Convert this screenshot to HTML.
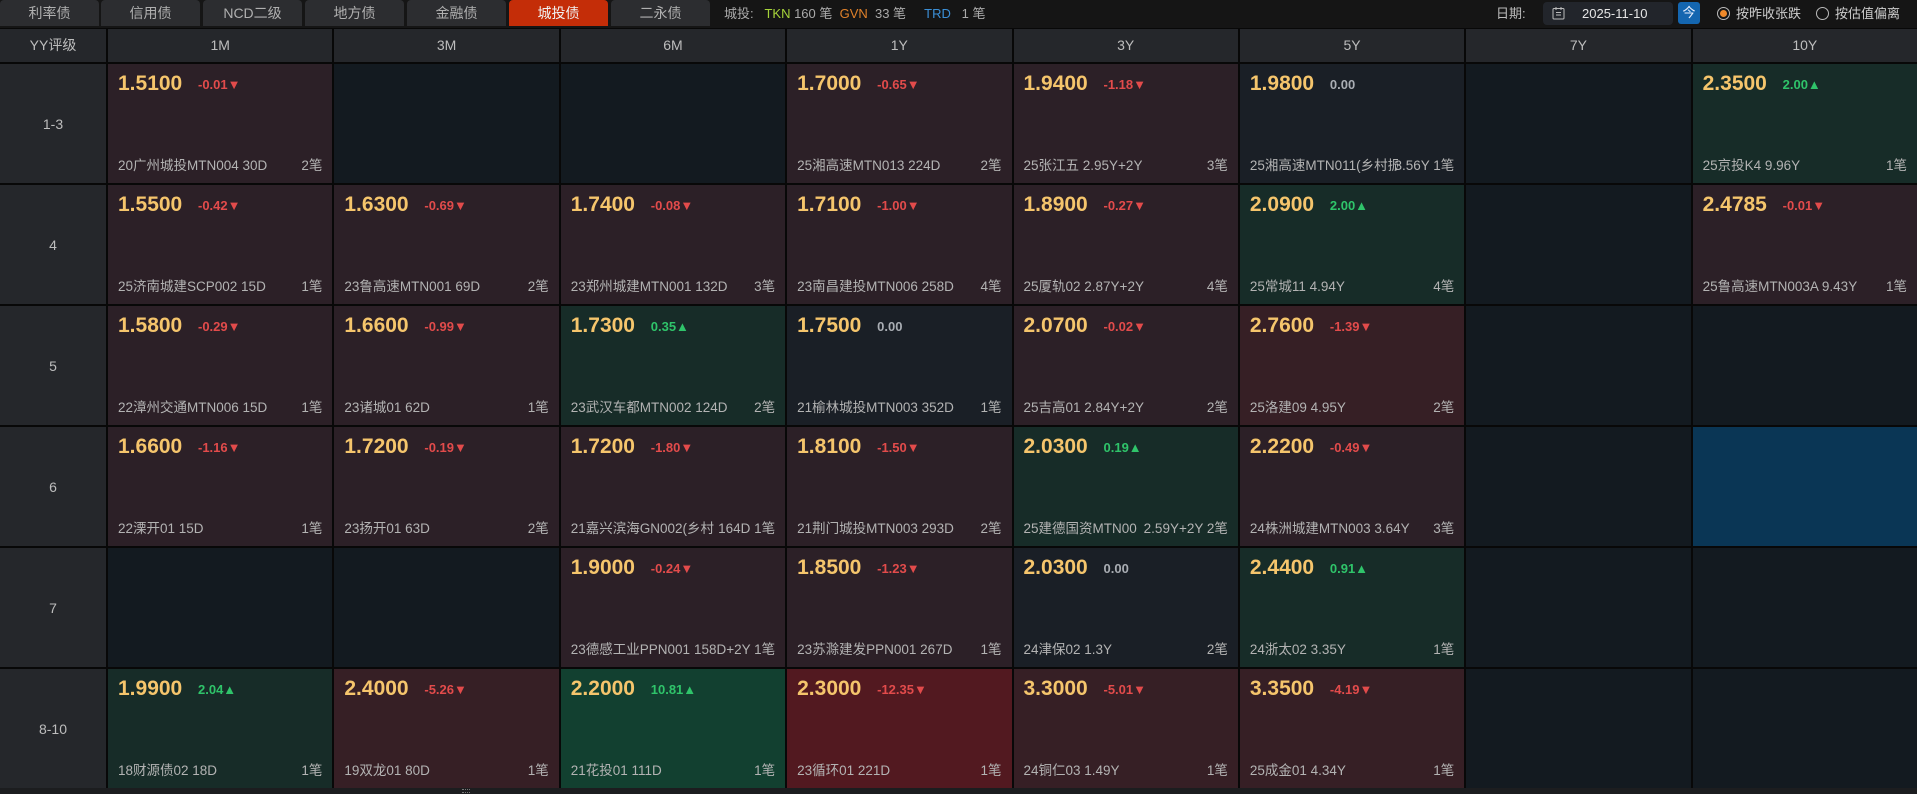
<!DOCTYPE html>
<html><head><meta charset="utf-8">
<style>
*{margin:0;padding:0;box-sizing:border-box}
body{width:1917px;height:794px;background:#080808;overflow:hidden;font-family:"Liberation Sans","Noto Sans CJK SC",sans-serif;position:relative}
.top{position:absolute;left:0;top:0;width:1917px;height:28px;background:#151515}
.tab{position:absolute;top:0;height:26px;width:99px;background:#2c2d30;border-radius:4px 4px 0 0;color:#b0b0b0;font-size:14px;text-align:center;line-height:26px}
.tab.on{background:#c42d08;color:#f0f0f0}
.stat{position:absolute;left:724px;top:0;line-height:27px;font-size:13px;color:#aaa;white-space:pre}
.grid{position:absolute;left:0;top:29px;width:1917px;display:grid;grid-template-columns:106px repeat(8,1fr);grid-template-rows:33px repeat(6,119px);gap:2px}
.h{background:#25272b;color:#bdbdbd;font-size:14px;text-align:center;line-height:33px}
.l{background:#25272b;color:#bdbdbd;font-size:14px;display:flex;align-items:center;justify-content:center}
.c{position:relative;background:#131a20}
.r{background:#2c2027}.g{background:#172c28}.z{background:#1a1f26}.m{background:#361f25}.R{background:#521920}.G{background:#124030}.b{background:#0a3655}
.p{position:absolute;left:10px;top:8px;font-size:21px;font-weight:bold;color:#f5c56c}
.d{position:absolute;left:90px;top:13px;font-size:13px;font-weight:bold}
.dn{color:#e24b4b}.up{color:#2fc46a}.zr{color:#a9adb3}
.n{position:absolute;left:10px;top:90px;font-size:13.5px;color:#b3b3b3;white-space:nowrap;overflow:hidden;max-width:205px}
.k{position:absolute;right:10px;top:90px;font-size:13.5px;color:#b3b3b3}
.bot{position:absolute;left:0;top:788px;width:1917px;height:6px;background:#1c1d1f}
</style></head><body>
<div class="top">
<div class="tab" style="left:0">利率债</div>
<div class="tab" style="left:101px">信用债</div>
<div class="tab" style="left:203px">NCD二级</div>
<div class="tab" style="left:305px">地方债</div>
<div class="tab" style="left:407px">金融债</div>
<div class="tab on" style="left:509px">城投债</div>
<div class="tab" style="left:611px">二永债</div>
<div class="stat">城投:   <span style="color:#a6d33a">TKN</span> 160 笔  <span style="color:#e0812a">GVN</span>  33 笔     <span style="color:#3b8fd6">TRD</span>   1 笔</div>
<div style="position:absolute;left:1496px;top:0;line-height:27px;font-size:13px;color:#bbb">日期:</div>
<div style="position:absolute;left:1543px;top:2px;width:130px;height:23px;background:#22252b;border-radius:4px;color:#e6e6e6;font-size:13px;line-height:23px">
<svg style="position:absolute;left:9px;top:5px" width="13" height="13" viewBox="0 0 13 13" fill="none" stroke="#bbb" stroke-width="1"><rect x="1" y="1.5" width="11" height="10.5" rx="1"/><path d="M4 0v3M9 0v3M4 5.5h5M4 8h5"/></svg>
<span style="position:absolute;left:39px">2025-11-10</span></div>
<div style="position:absolute;left:1678px;top:2px;width:22px;height:22px;background:#1466b0;border-radius:3px;color:#e8f0ff;font-size:13px;text-align:center;line-height:22px">今</div>
<div style="position:absolute;left:1717px;top:7px;width:13px;height:13px;border:1px solid #bbb;border-radius:50%"><div style="margin:2px;width:7px;height:7px;border-radius:50%;background:#f08a2a"></div></div>
<div style="position:absolute;left:1736px;top:0;line-height:27px;font-size:13px;color:#ccc">按昨收张跌</div>
<div style="position:absolute;left:1816px;top:7px;width:13px;height:13px;border:1px solid #bbb;border-radius:50%"></div>
<div style="position:absolute;left:1835px;top:0;line-height:27px;font-size:13px;color:#ccc">按估值偏离</div>
</div>
<div class="grid">
<div class="h">YY评级</div><div class="h">1M</div><div class="h">3M</div><div class="h">6M</div><div class="h">1Y</div><div class="h">3Y</div><div class="h">5Y</div><div class="h">7Y</div><div class="h">10Y</div>

<div class="l">1-3</div>
<div class="c r"><div class="p">1.5100</div><div class="d dn">-0.01▼</div><div class="n">20广州城投MTN004 30D</div><div class="k">2笔</div></div>
<div class="c"></div><div class="c"></div>
<div class="c r"><div class="p">1.7000</div><div class="d dn">-0.65▼</div><div class="n">25湘高速MTN013 224D</div><div class="k">2笔</div></div>
<div class="c r"><div class="p">1.9400</div><div class="d dn">-1.18▼</div><div class="n">25张江五 2.95Y+2Y</div><div class="k">3笔</div></div>
<div class="c z"><div class="p">1.9800</div><div class="d zr">0.00</div><div class="n" style="max-width:148px">25湘高速MTN011(乡村振</div><div class="k">3.56Y 1笔</div></div>
<div class="c"></div>
<div class="c g"><div class="p">2.3500</div><div class="d up">2.00▲</div><div class="n">25京投K4 9.96Y</div><div class="k">1笔</div></div>

<div class="l">4</div>
<div class="c r"><div class="p">1.5500</div><div class="d dn">-0.42▼</div><div class="n">25济南城建SCP002 15D</div><div class="k">1笔</div></div>
<div class="c r"><div class="p">1.6300</div><div class="d dn">-0.69▼</div><div class="n">23鲁高速MTN001 69D</div><div class="k">2笔</div></div>
<div class="c r"><div class="p">1.7400</div><div class="d dn">-0.08▼</div><div class="n">23郑州城建MTN001 132D</div><div class="k">3笔</div></div>
<div class="c r"><div class="p">1.7100</div><div class="d dn">-1.00▼</div><div class="n">23南昌建投MTN006 258D</div><div class="k">4笔</div></div>
<div class="c r"><div class="p">1.8900</div><div class="d dn">-0.27▼</div><div class="n">25厦轨02 2.87Y+2Y</div><div class="k">4笔</div></div>
<div class="c g"><div class="p">2.0900</div><div class="d up">2.00▲</div><div class="n">25常城11 4.94Y</div><div class="k">4笔</div></div>
<div class="c"></div>
<div class="c r"><div class="p">2.4785</div><div class="d dn">-0.01▼</div><div class="n">25鲁高速MTN003A 9.43Y</div><div class="k">1笔</div></div>

<div class="l">5</div>
<div class="c r"><div class="p">1.5800</div><div class="d dn">-0.29▼</div><div class="n">22漳州交通MTN006 15D</div><div class="k">1笔</div></div>
<div class="c r"><div class="p">1.6600</div><div class="d dn">-0.99▼</div><div class="n">23诸城01 62D</div><div class="k">1笔</div></div>
<div class="c g"><div class="p">1.7300</div><div class="d up">0.35▲</div><div class="n">23武汉车都MTN002 124D</div><div class="k">2笔</div></div>
<div class="c z"><div class="p">1.7500</div><div class="d zr">0.00</div><div class="n">21榆林城投MTN003 352D</div><div class="k">1笔</div></div>
<div class="c r"><div class="p">2.0700</div><div class="d dn">-0.02▼</div><div class="n">25吉高01 2.84Y+2Y</div><div class="k">2笔</div></div>
<div class="c m"><div class="p">2.7600</div><div class="d dn">-1.39▼</div><div class="n">25洛建09 4.95Y</div><div class="k">2笔</div></div>
<div class="c"></div><div class="c"></div>

<div class="l">6</div>
<div class="c r"><div class="p">1.6600</div><div class="d dn">-1.16▼</div><div class="n">22溧开01 15D</div><div class="k">1笔</div></div>
<div class="c r"><div class="p">1.7200</div><div class="d dn">-0.19▼</div><div class="n">23扬开01 63D</div><div class="k">2笔</div></div>
<div class="c r"><div class="p">1.7200</div><div class="d dn">-1.80▼</div><div class="n" style="max-width:150px">21嘉兴滨海GN002(乡村</div><div class="k">164D 1笔</div></div>
<div class="c r"><div class="p">1.8100</div><div class="d dn">-1.50▼</div><div class="n">21荆门城投MTN003 293D</div><div class="k">2笔</div></div>
<div class="c g"><div class="p">2.0300</div><div class="d up">0.19▲</div><div class="n" style="max-width:135px">25建德国资MTN00</div><div class="k">2.59Y+2Y 2笔</div></div>
<div class="c r"><div class="p">2.2200</div><div class="d dn">-0.49▼</div><div class="n">24株洲城建MTN003 3.64Y</div><div class="k">3笔</div></div>
<div class="c"></div>
<div class="c b"></div>

<div class="l">7</div>
<div class="c"></div><div class="c"></div>
<div class="c r"><div class="p">1.9000</div><div class="d dn">-0.24▼</div><div class="n" style="max-width:140px">23德感工业PPN001</div><div class="k">158D+2Y 1笔</div></div>
<div class="c r"><div class="p">1.8500</div><div class="d dn">-1.23▼</div><div class="n">23苏滁建发PPN001 267D</div><div class="k">1笔</div></div>
<div class="c z"><div class="p">2.0300</div><div class="d zr">0.00</div><div class="n">24津保02 1.3Y</div><div class="k">2笔</div></div>
<div class="c g"><div class="p">2.4400</div><div class="d up">0.91▲</div><div class="n">24浙太02 3.35Y</div><div class="k">1笔</div></div>
<div class="c"></div><div class="c"></div>

<div class="l">8-10</div>
<div class="c g"><div class="p">1.9900</div><div class="d up">2.04▲</div><div class="n">18财源债02 18D</div><div class="k">1笔</div></div>
<div class="c m"><div class="p">2.4000</div><div class="d dn">-5.26▼</div><div class="n">19双龙01 80D</div><div class="k">1笔</div></div>
<div class="c G"><div class="p">2.2000</div><div class="d up">10.81▲</div><div class="n">21花投01 111D</div><div class="k">1笔</div></div>
<div class="c R"><div class="p">2.3000</div><div class="d dn">-12.35▼</div><div class="n">23循环01 221D</div><div class="k">1笔</div></div>
<div class="c m"><div class="p">3.3000</div><div class="d dn">-5.01▼</div><div class="n">24铜仁03 1.49Y</div><div class="k">1笔</div></div>
<div class="c m"><div class="p">3.3500</div><div class="d dn">-4.19▼</div><div class="n">25成金01 4.34Y</div><div class="k">1笔</div></div>
<div class="c"></div><div class="c"></div>
</div>
<div class="bot"><div style="position:absolute;left:462px;top:1px;width:8px;height:4px;border-top:1px dotted #777;border-bottom:1px dotted #777"></div></div>
</body></html>
